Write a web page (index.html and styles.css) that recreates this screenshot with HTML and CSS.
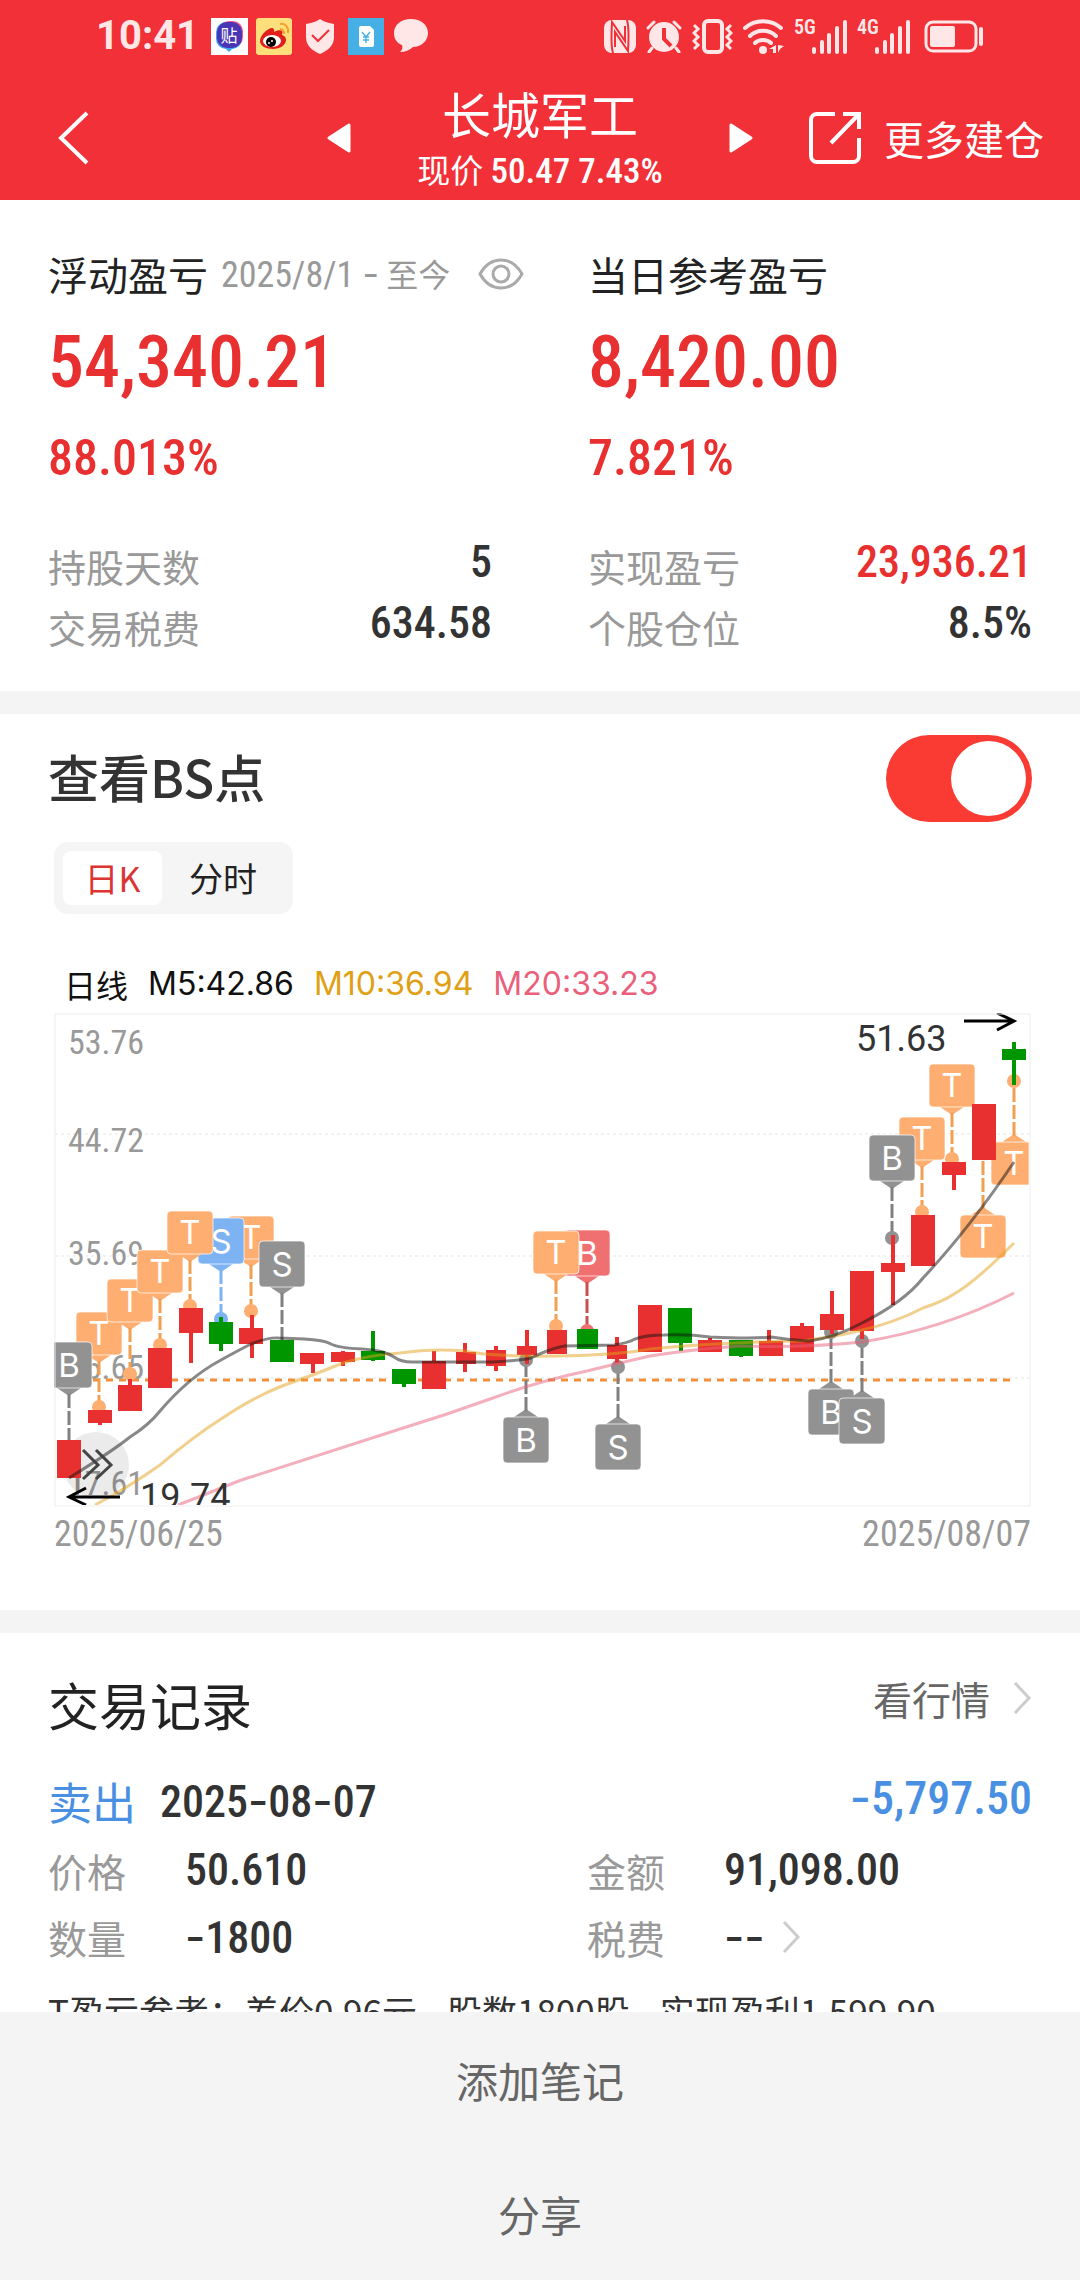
FILE: index.html
```html
<!DOCTYPE html>
<html lang="zh-CN">
<head>
<meta charset="utf-8">
<meta name="viewport" content="width=device-width, initial-scale=1">
<title>长城军工</title>
<link rel="stylesheet" href="styles.css">
</head>
<body>
<header class="top">
  <div class="status">
    <div class="status-side">
      <span class="clock">10:41</span>
      <svg class="app-icon" width="37" height="37" viewBox="0 0 37 37">
        <rect width="37" height="37" fill="#fff"/>
        <path d="M13 29l5 5 5-5z" fill="#3aa5f5"/>
        <rect x="5" y="4" width="26" height="27" rx="10" fill="#3fa4f4"/>
        <rect x="8" y="3" width="24" height="26" rx="10" fill="#f0588c"/>
        <rect x="6" y="4" width="25" height="26" rx="10" fill="#4a35b4"/>
        <text x="18" y="24" font-size="17" fill="#fff" text-anchor="middle">贴</text>
      </svg>
      <svg class="app-icon" width="36" height="37" viewBox="0 0 36 37">
        <rect width="36" height="37" rx="3" fill="#ffdf7c"/>
        <path d="M4 23c0-6 8-13 12-13 3 0 2 4 2 4s6-3 8-1c1 1 0 4 0 4s4 1 4 5c0 5-6 9-13 9S4 28 4 23z" fill="#e1201c"/>
        <ellipse cx="16" cy="23" rx="9" ry="6" fill="#fff"/>
        <circle cx="15" cy="24" r="5" fill="#000"/><circle cx="13" cy="25" r="1" fill="#fff"/><circle cx="16" cy="23" r="1" fill="#fff"/>
        <path d="M24 6c5-1 9 3 8 9M24 11c3 0 4 2 4 5" fill="none" stroke="#f0a32a" stroke-width="2"/>
      </svg>
      <svg class="app-icon shield" width="28" height="35" viewBox="0 0 28 35">
        <path d="M14 0c4 3 9 4 14 5v13c0 8-5 13-14 17C5 31 0 26 0 18V5c5-1 10-2 14-5z" fill="#ffe6e7"/>
        <path d="M6 16l6 6 11-11" fill="none" stroke="#f13037" stroke-width="2"/>
      </svg>
      <svg class="app-icon" width="36" height="37" viewBox="0 0 36 37">
        <rect width="36" height="37" fill="#45afe6"/>
        <path d="M13 8h9l4 4v15a2 2 0 0 1-2 2H13a2 2 0 0 1-2-2V10a2 2 0 0 1 2-2z" fill="#fff"/>
        <path d="M14 14l4 5 4-5M18 19v6M15 19h6M15 22h6" fill="none" stroke="#45afe6" stroke-width="1.4"/>
      </svg>
      <svg class="app-icon bubble" width="34" height="34" viewBox="0 0 34 34">
        <path d="M17 0c10 0 17 6 17 14s-7 14-15 14c-3 3-8 5-13 5 2-2 3-4 2-7C3 24 0 20 0 14 0 6 7 0 17 0z" fill="#ffe6e7"/>
      </svg>
    </div>
    <div class="status-side">
      <svg class="nfc" width="32" height="33" viewBox="0 0 32 33">
        <rect width="32" height="33" rx="8" fill="#ffe6e7"/>
        <path d="M9 33c-2-6-2-14-1-31l13 19V6M23 0c2 7 2 15 1 31L11 12v15" fill="none" stroke="#f13037" stroke-width="2"/>
      </svg>
      <svg class="alarm" width="36" height="33" viewBox="0 0 36 33">
        <circle cx="18" cy="17" r="15" fill="#ffe6e7"/>
        <path d="M2 8l6-6M34 8l-6-6M6 28l-3 4M30 28l3 4" stroke="#ffe6e7" stroke-width="3" stroke-linecap="round"/>
        <path d="M18 8v11l7 7" fill="none" stroke="#f13037" stroke-width="4"/>
      </svg>
      <svg class="vibrate" width="41" height="35" viewBox="0 0 41 35">
        <rect x="12" y="2" width="18" height="31" rx="4" fill="none" stroke="#ffe6e7" stroke-width="4"/>
        <path d="M2 6l4 4-4 4 4 4-4 4 4 4-4 4M39 6l-4 4 4 4-4 4 4 4-4 4 4 4" fill="none" stroke="#ffe6e7" stroke-width="3"/>
      </svg>
      <svg class="wifi" width="41" height="35" viewBox="0 0 41 35">
        <path d="M2 9c10-9 26-9 36 0M7 17c7-7 19-7 26 0M12 24c4-4 12-4 16 0" fill="none" stroke="#ffe6e7" stroke-width="4" stroke-linecap="round"/>
        <circle cx="20" cy="31" r="4" fill="#ffe6e7"/>
        <path d="M33 26v8h-3v-4h-4zM35 34v-8l6 1-4 3z" fill="#ffe6e7"/>
      </svg>
      <svg class="signal" width="53" height="35" viewBox="0 0 53 35">
        <text x="0" y="15" class="net">5G</text>
        <path d="M20 30v3M28 23v10M35 16v17M43 9v24M51 3v30" stroke="#ffe6e7" stroke-width="4" stroke-linecap="round"/>
      </svg>
      <svg class="signal" width="53" height="35" viewBox="0 0 53 35">
        <text x="0" y="15" class="net">4G</text>
        <path d="M20 30v3M28 23v10M35 16v17M43 9v24M51 3v30" stroke="#ffe6e7" stroke-width="4" stroke-linecap="round"/>
      </svg>
      <svg class="battery" width="60" height="33" viewBox="0 0 60 33">
        <rect x="2" y="2" width="50" height="29" rx="7" fill="none" stroke="#ffe6e7" stroke-width="3"/>
        <rect x="6" y="6" width="25" height="21" rx="2" fill="#ffe6e7"/>
        <path d="M57 9v15" stroke="#ffe6e7" stroke-width="4" stroke-linecap="round"/>
      </svg>
    </div>
  </div>
  <nav class="bar">
    <button class="icon-btn back" type="button" aria-label="返回">
      <svg width="32" height="54" viewBox="0 0 32 54"><path d="M29 2L3 27l26 25" fill="none" stroke="#fff" stroke-width="4"/></svg>
    </button>
    <div class="switcher">
      <button class="icon-btn" type="button" aria-label="上一只">
        <svg width="24" height="30" viewBox="0 0 24 30"><path d="M22 2v26L2 15z" fill="#fff" stroke="#fff" stroke-width="3" stroke-linejoin="round"/></svg>
      </button>
      <div class="heading">
        <h1>长城军工</h1>
        <p class="quote"><span>现价</span> <span class="num">50.47 7.43%</span></p>
      </div>
      <button class="icon-btn" type="button" aria-label="下一只">
        <svg width="24" height="30" viewBox="0 0 24 30"><path d="M2 2v26l20-13z" fill="#fff" stroke="#fff" stroke-width="3" stroke-linejoin="round"/></svg>
      </button>
    </div>
    <a class="more" href="#more">
      <svg width="54" height="54" viewBox="0 0 54 54" fill="none" stroke="#fff" stroke-width="4"><path d="M27 3H9a6 6 0 0 0-6 6v36a6 6 0 0 0 6 6h36a6 6 0 0 0 6-6V27"/><path d="M35 3h16v15M51 3L23 32"/></svg>
      <span>更多建仓</span>
    </a>
  </nav>
</header>

<main class="content">
  <section class="summary">
    <div>
      <h2 class="sum-title">浮动盈亏 <small><span class="num">2025/8/1 <span class="dash">-</span></span> 至今</small>
        <button class="icon-btn" type="button" aria-label="隐藏金额">
          <svg width="46" height="32" viewBox="0 0 46 32" fill="none" stroke="#aaa" stroke-width="3"><path d="M2 16C7 7 14 2 23 2s16 5 21 14c-5 9-12 14-21 14S7 25 2 16z"/><circle cx="23" cy="16" r="8"/></svg>
        </button>
      </h2>
      <p class="amount num">54,340.21</p>
      <p class="percent num">88.013%</p>
      <dl class="facts">
        <div><dt>持股天数</dt><dd class="num">5</dd></div>
        <div><dt>交易税费</dt><dd class="num">634.58</dd></div>
      </dl>
    </div>
    <div>
      <h2 class="sum-title">当日参考盈亏</h2>
      <p class="amount num">8,420.00</p>
      <p class="percent num">7.821%</p>
      <dl class="facts">
        <div><dt>实现盈亏</dt><dd class="num red">23,936.21</dd></div>
        <div><dt>个股仓位</dt><dd class="num">8.5%</dd></div>
      </dl>
    </div>
  </section>

  <section class="bs">
    <div class="bs-head">
      <label class="title" for="bs-switch">查看BS点</label>
      <input class="switch" id="bs-switch" type="checkbox" role="switch" checked>
    </div>
    <div class="chart-area">
      <div class="tabs">
        <button class="tab active" type="button">日K</button>
        <button class="tab" type="button">分时</button>
      </div>
      <div class="legend">
        <span class="cjk">日线</span><span>M5:42.86</span><span class="ma10">M10:36.94</span><span class="ma20">M20:33.23</span>
      </div>
      <svg class="chart" viewBox="0 0 977 494" role="img" aria-label="日K线">
        <defs>
          <g id="down"><path d="M-12 0h24L0 8z" stroke="none"/><path d="M0 6v48" fill="none" stroke-dasharray="14 3"/></g>
          <g id="up"><path d="M-12 0h24L0-8z" stroke="none"/><path d="M0-6v-50" fill="none" stroke-dasharray="14 3"/></g>
        </defs>
        <path class="grid" d="M1 121h975M1 243h975M1 365h975"/>
        <g class="axis">
          <text x="14" y="41">53.76</text>
          <text x="14" y="139">44.72</text>
          <text x="14" y="252">35.69</text>
          <text x="14" y="366">26.65</text>
          <text x="14" y="482">17.61</text>
        </g>
        <path class="cost" d="M39 367H960"/>
        <circle cx="42" cy="452" r="33" fill="#000" opacity=".08"/>

        <!-- trade markers: anchor is the side of the box that faces the candle -->
        <g class="m t" transform="translate(45 342)"><use href="#down"/><circle cy="52" r="7"/><rect x="-23" y="-43" width="46" height="43" rx="4"/><text y="-10">T</text></g>
        <g class="m g" transform="translate(15 375)"><use href="#down"/><rect x="-23" y="-46" width="46" height="46" rx="4"/><text y="-11">B</text></g>
        <g class="m t" transform="translate(76 309)"><use href="#down"/><circle cy="52" r="7"/><rect x="-23" y="-43" width="46" height="43" rx="4"/><text y="-10">T</text></g>
        <g class="m t" transform="translate(106 280)"><use href="#down"/><circle cy="52" r="7"/><rect x="-23" y="-43" width="46" height="43" rx="4"/><text y="-10">T</text></g>
        <g class="m t" transform="translate(197 246)"><use href="#down"/><circle cy="52" r="7"/><rect x="-23" y="-43" width="46" height="43" rx="4"/><text y="-10">T</text></g>
        <g class="m s" transform="translate(167 251)"><use href="#down"/><circle cy="55" r="7"/><rect x="-23" y="-46" width="46" height="46" rx="4"/><text y="-11">S</text></g>
        <g class="m t" transform="translate(136 241)"><use href="#down"/><circle cy="52" r="7"/><rect x="-23" y="-43" width="46" height="43" rx="4"/><text y="-10">T</text></g>
        <g class="m g" transform="translate(228 274)"><use href="#down"/><rect x="-23" y="-46" width="46" height="46" rx="4"/><text y="-11">S</text></g>
        <g class="m b" transform="translate(533 263)"><use href="#down"/><circle cy="55" r="7"/><rect x="-23" y="-46" width="46" height="46" rx="4"/><text y="-11">B</text></g>
        <g class="m t" transform="translate(502 261)"><use href="#down"/><circle cy="52" r="7"/><rect x="-23" y="-43" width="46" height="43" rx="4"/><text y="-10">T</text></g>
        <g class="m g" transform="translate(472 404)"><use href="#up"/><circle cy="-57" r="7"/><rect x="-23" width="46" height="46" rx="4"/><text y="35">B</text></g>
        <g class="m g" transform="translate(564 411)"><use href="#up"/><circle cy="-57" r="7"/><rect x="-23" width="46" height="46" rx="4"/><text y="35">S</text></g>
        <g class="m g" transform="translate(777 376)"><use href="#up"/><circle cy="-57" r="7"/><rect x="-23" width="46" height="46" rx="4"/><text y="35">B</text></g>
        <g class="m g" transform="translate(808 385)"><use href="#up"/><circle cy="-57" r="7"/><rect x="-23" width="46" height="46" rx="4"/><text y="35">S</text></g>
        <g class="m t" transform="translate(868 147)"><use href="#down"/><circle cy="52" r="7"/><rect x="-23" y="-43" width="46" height="43" rx="4"/><text y="-10">T</text></g>
        <g class="m g" transform="translate(838 168)"><use href="#down"/><circle cy="57" r="7"/><rect x="-23" y="-46" width="46" height="46" rx="4"/><text y="-11">B</text></g>
        <g class="m t" transform="translate(898 94)"><use href="#down"/><circle cy="52" r="7"/><rect x="-23" y="-43" width="46" height="43" rx="4"/><text y="-10">T</text></g>
        <g class="m t" transform="translate(929 202)"><use href="#up"/><rect x="-23" width="46" height="43" rx="4"/><text y="33">T</text></g>
        <g class="m t" transform="translate(960 129)"><use href="#up"/><circle cy="-61" r="7"/><path d="M15 0v43h-34a4 4 0 0 1-4-4V4a4 4 0 0 1 4-4z" stroke="#fff" stroke-opacity=".7" stroke-width="1"/><text y="33">T</text></g>

        <!-- candles -->
        <path class="body up" d="M3 427h24v38H3zM34 397h24v13H34zM64 372h24v26H64zM94 335h24v40H94zM125 295h24v25h-24zM185 315h24v16h-24zM246 340h24v11h-24zM277 339h24v10h-24zM368 348h24v28h-24zM402 339h20v12h-20zM432 337h20v16h-20zM463 333h20v9h-20zM493 317h20v24h-20zM553 332h20v14h-20zM584 292h24v47h-24zM644 327h24v12h-24zM705 328h24v15h-24zM736 313h24v26h-24zM766 301h24v16h-24zM796 258h24v60h-24zM827 250h24v9h-24zM857 202h24v51h-24zM888 149h24v13h-24zM918 91h24v56h-24z"/>
        <path class="body dn" d="M155 309h24v22h-24zM216 327h24v22h-24zM307 338h24v9h-24zM338 356h24v15h-24zM523 316h21v20h-21zM614 295h24v35h-24zM675 327h24v16h-24zM948 36h24v11h-24z"/>
        <path class="wick up" d="M46 397v15M76 366v10M137 310v40M198 302v43M259 345v15M289 338v15M380 338v20M411 330v29M442 333v25M473 317v34M563 324v26M656 325v10M715 317v15M748 310v10M778 278v43M808 300v26M839 222v70M900 150v27"/>
        <path class="wick dn" d="M167 304v34M319 318v30M350 356v18M627 320v18M687 330v14M960 29v43"/>
        <path d="M24 465v13" stroke="#888" stroke-width="3"/>

        <!-- moving averages -->
        <g class="ma">
          <path stroke="#ea5f7b" d="M124 492Q145 484 167 475T197 464L346 416Q392 402 439 385Q485 368 533 358Q565 350 596 343Q640 336 687 333Q748 335 808 329Q890 316 960 280"/>
          <path stroke="#e2a21a" d="M41 492Q75 474 106 452Q140 423 167 406Q200 384 228 373Q260 362 289 350Q315 342 346 340Q380 335 410 338Q440 344 503 343Q565 342 596 336Q670 329 748 328Q790 322 808 317Q840 310 869 295Q890 288 900 281Q920 270 960 230"/>
          <path stroke="#111" d="M15 465Q60 437 76 424Q95 412 106 398Q135 364 167 347Q185 337 197 331Q215 324 225 325L250 326Q270 327 277 331Q285 335 308 336Q330 337 340 344Q347 349 358 349L439 349Q470 347 477 345Q495 336 510 333L560 332Q574 330 581 326Q592 322 610 322Q635 321 656 324Q700 326 717 324Q735 327 755 328Q780 325 808 310Q850 289 869 265Q915 216 960 149"/>
        </g>
        <path d="M29 437l15 15-15 14M42 437l15 15-15 14" fill="none" stroke="#444" stroke-width="3"/>
        <g class="extreme">
          <path d="M66 484H15M32 475l-17 9 17 8M910 8h50M943 0l17 8-17 9"/>
          <text x="86" y="496">19.74</text>
          <text x="802" y="38">51.63</text>
        </g>
        <path d="M0 492h977v2H0z" fill="#fff"/>
        <rect x="1" y="1" width="975" height="492" fill="none" stroke="#eee" stroke-width="1"/>
      </svg>
      <div class="range num"><time>2025/06/25</time><time>2025/08/07</time></div>
    </div>
  </section>

  <section class="trades">
    <div class="trades-head">
      <h2 class="title">交易记录</h2>
      <a class="quote-link" href="#quote"><span>看行情</span>
        <svg width="20" height="32" viewBox="0 0 20 32"><path d="M3 1l14 15L3 31" fill="none" stroke="#ccc" stroke-width="3"/></svg>
      </a>
    </div>
    <div class="trade-line">
      <span class="side">卖出</span><time class="num date">2025<span class="dash">-</span>08<span class="dash">-</span>07</time><span class="num profit"><span class="dash">-</span>5,797.50</span>
    </div>
    <dl class="details">
      <div><dt>价格</dt><dd class="num">50.610</dd></div>
      <div><dt>金额</dt><dd class="num">91,098.00</dd></div>
      <div><dt>数量</dt><dd class="num"><span><span class="dash">-</span>1800</span></dd></div>
      <div><dt>税费</dt><dd class="num"><span class="dash">--</span>
        <svg width="20" height="32" viewBox="0 0 20 32"><path d="M3 1l14 15L3 31" fill="none" stroke="#ccc" stroke-width="3"/></svg></dd></div>
    </dl>
    <p class="t-note"><span>T盈亏参考：差价0.96元</span><span>股数1800股</span><span>实现盈利1,599.90</span></p>
  </section>
</main>

<footer class="actions">
  <button type="button">添加笔记</button>
  <button type="button">分享</button>
</footer>
</body>
</html>
```
FILE: styles.css
```css
* { box-sizing: border-box; margin: 0; padding: 0; }

body {
  display: flex;
  flex-direction: column;
  height: 100vh;
  background: #fff;
  color: #333;
  font-family: "Noto Sans CJK SC", sans-serif;
}

h1, h2 { font-weight: 400; }
svg { display: block; flex: none; }
a { color: inherit; text-decoration: none; }
button { border: 0; background: none; font: inherit; color: inherit; }
.num { font-family: "Roboto Condensed", "Noto Sans CJK SC", sans-serif; font-weight: 500; }
.dash { font-family: Inter, sans-serif; }
.red { color: #e83030; }
.title { font-size: 51px; line-height: 72px; font-weight: 500; }

/* header */
.top { flex: none; background: #f13037; color: #fff; }
.status {
  display: flex;
  justify-content: space-between;
  height: 72px;
  padding: 0 96px;
}
.status-side { display: flex; align-items: center; gap: 10px; }
.status-side:first-child { gap: 8px; }
.clock {
  margin-right: 4px;
  font: 700 40px/72px Roboto, sans-serif;
  color: #ffe6e7;
}
.shield { margin: 0 6px; }
.bubble { margin-left: 2px; }
.signal { overflow: visible; }
.net { font: 600 20px "Roboto Condensed", sans-serif; fill: #ffe6e7; }
.battery { margin-left: 4px; }

.bar {
  display: grid;
  grid-template-columns: 1fr 426px 1fr;
  align-items: center;
  height: 128px;
  padding: 4px 36px 0;
}
.back { justify-self: start; margin-left: 22px; }
.switcher { display: flex; align-items: center; justify-content: space-between; }
.heading { text-align: center; }
h1 { font-size: 49px; line-height: 64px; }
.quote { font-size: 33px; line-height: 48px; }
.quote .num { font-size: 35px; }
.more { display: flex; align-items: center; justify-content: flex-end; gap: 22px; font-size: 40px; white-space: nowrap; }

/* scrolling area */
.content { flex: 1; min-height: 0; overflow: hidden; background: #f4f4f4; }
.content > section { background: #fff; }

.summary {
  display: grid;
  grid-template-columns: repeat(2, minmax(0, 1fr));
  gap: 96px;
  padding: 45px 48px 33px;
}
.sum-title {
  display: flex;
  align-items: center;
  height: 58px;
  font-size: 40px;
  line-height: 56px;
  color: #222;
  white-space: nowrap;
}
.sum-title small { margin-left: 13px; font-size: 32px; color: #999; }
.sum-title small .num { font-size: 36px; font-weight: 400; }
.sum-title .icon-btn { margin-left: 28px; }
.amount { margin-top: 18px; font-size: 72px; line-height: 84px; color: #e83030; }
.percent { margin-top: 23px; font-size: 50px; line-height: 60px; color: #e83030; }
.facts { margin-top: 48px; }
.facts div { display: flex; justify-content: space-between; height: 61px; }
.facts dt { font-size: 38px; line-height: 60px; color: #999; }
.facts dd { font-size: 44px; line-height: 52px; }

/* BS chart */
.bs { margin-top: 23px; padding: 21px 48px 52px; }
.bs-head { display: flex; align-items: center; justify-content: space-between; }
.bs-head .title { margin-bottom: 6px; }
.switch {
  appearance: none;
  width: 146px;
  height: 87px;
  padding: 6px;
  border-radius: 44px;
  background: #ccc;
}
.switch::before {
  content: "";
  display: block;
  width: 75px;
  height: 75px;
  border-radius: 50%;
  background: #fff;
}
.switch:checked { background: #fa3b33; }
.switch:checked::before { margin-left: auto; }

.chart-area { padding: 0 1px 0 6px; }
.tabs {
  display: flex;
  width: fit-content;
  margin-top: 20px;
  padding: 9px;
  border-radius: 14px;
  background: #f5f5f5;
}
.tab { width: 99px; height: 54px; border-radius: 8px; font-size: 34px; line-height: 52px; color: #222; }
.tab + .tab { width: 122px; }
.tab.active { background: #fff; color: #dc3433; }

.legend {
  display: flex;
  gap: 20px;
  margin-top: 46px;
  padding-left: 10px;
  font: 400 32px/48px Inter, sans-serif;
  color: #111;
}
.legend .cjk { font: 400 32px/48px "Noto Sans CJK SC", sans-serif; }
.ma10 { color: #e0a015; }
.ma20 { color: #ea5f7b; }

.chart { width: 100%; height: auto; margin-top: 5px; }
.grid { fill: none; stroke: #f2f2f2; stroke-width: 2; stroke-dasharray: 3 3; }
.axis { font: 400 34px "Roboto Condensed", sans-serif; fill: #999; }
.cost { fill: none; stroke: #f08f3c; stroke-width: 3; stroke-dasharray: 7 6; }
.m { stroke-width: 3; }
.m rect { stroke: #fff; stroke-opacity: .7; stroke-width: 1; }
.m circle { stroke: none; }
.m text { font: 400 33px Inter, sans-serif; fill: #fff; stroke: none; text-anchor: middle; }
.m.t { fill: #feae70; stroke: #f0a050; }
.m.g { fill: #929292; stroke: #808080; }
.m.s { fill: #7db2f3; stroke: #7db2f3; }
.m.b { fill: #f07072; stroke: #c85050; }
.body.up { fill: #e83030; }
.body.dn { fill: #009600; }
.wick { fill: none; stroke-width: 4; }
.wick.up { stroke: #e83030; }
.wick.dn { stroke: #009600; }
.ma path { fill: none; stroke-width: 3; stroke-opacity: .5; stroke-linejoin: round; }
.extreme path { fill: none; stroke: #000; stroke-width: 3; }
.extreme text { font: 400 36px Roboto, sans-serif; fill: #333; }

.range { display: flex; justify-content: space-between; margin-top: 3px; font-size: 36px; font-weight: 400; line-height: 48px; color: #999; }

/* trades */
.trades { margin-top: 23px; padding: 35px 48px 40px; }
.trades-head { display: flex; justify-content: space-between; }
.trades .title { font-weight: 400; color: #222; }
.quote-link { display: flex; align-items: center; gap: 22px; height: 60px; font-size: 39px; color: #666; }
.trade-line { display: flex; margin-top: 31px; line-height: 60px; }
.side { font-size: 44px; color: #4a90e2; }
.date { margin-left: 24px; font-size: 44px; }
.profit { margin-left: auto; font-size: 46px; line-height: 52px; color: #4a90e2; }
.details { display: grid; grid-template-columns: 539px 1fr; margin-top: 4px; }
.details div { display: flex; align-items: center; height: 67px; }
.details dt { width: 137px; font-size: 39px; color: #999; }
.details dd { display: flex; align-items: center; gap: 16px; font-size: 44px; }
.t-note { display: flex; gap: 30px; margin-top: 16px; font-size: 35px; line-height: 50px; white-space: nowrap; }

/* bottom actions */
.actions { flex: none; display: grid; background: #f4f4f4; }
.actions button { height: 134px; font-size: 42px; color: #666; }
```
